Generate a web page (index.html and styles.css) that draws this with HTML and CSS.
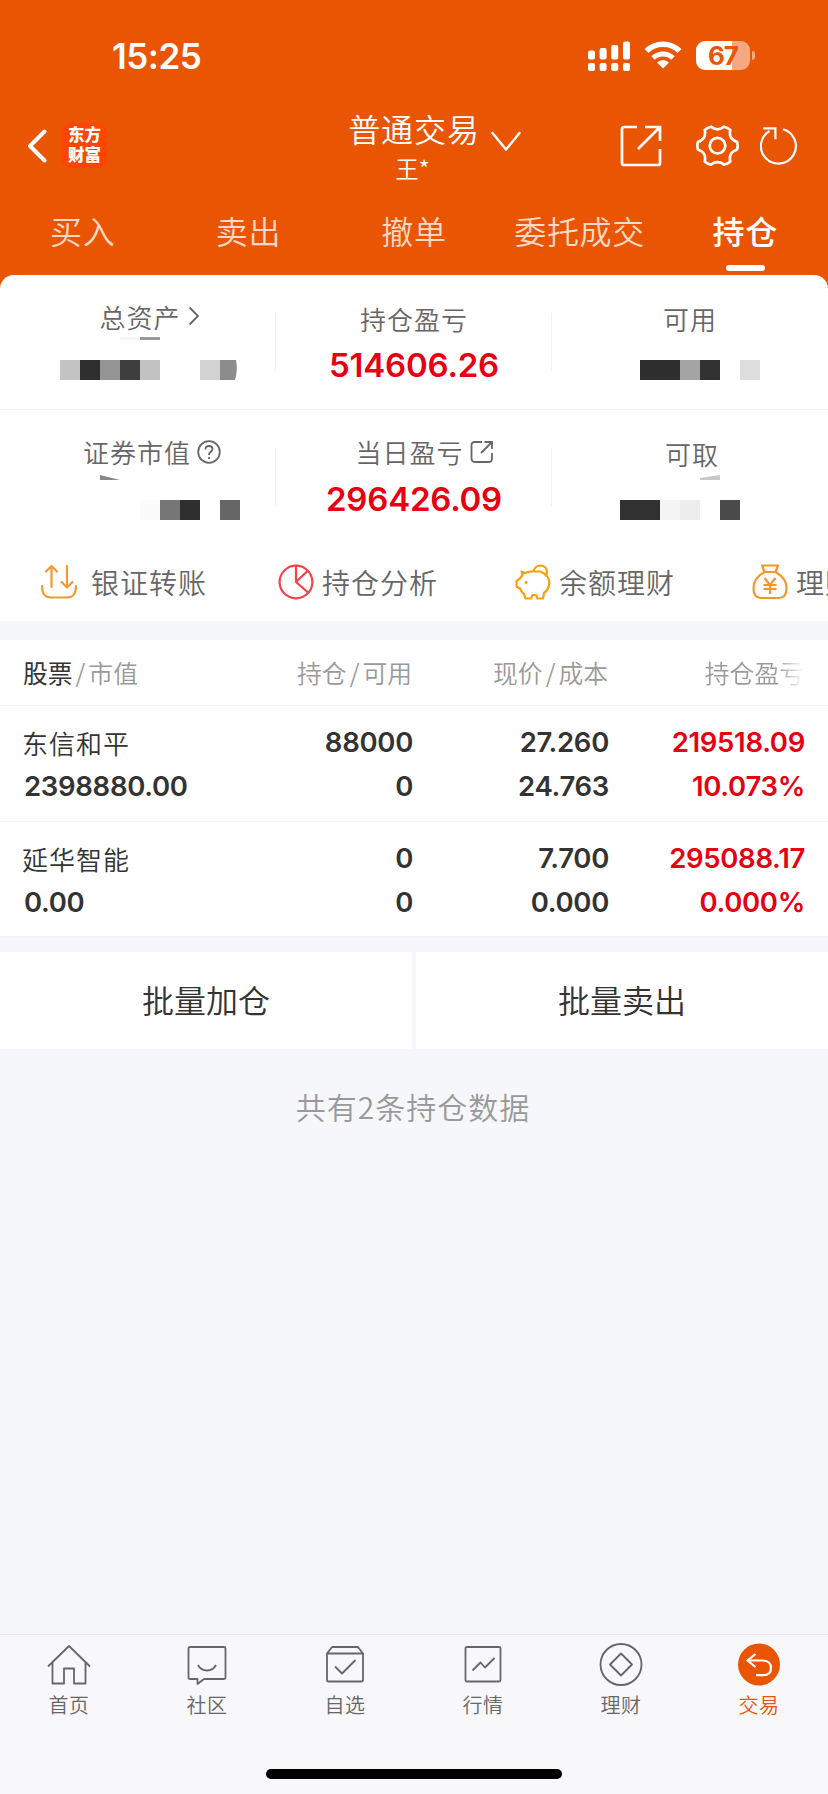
FILE: index.html
```html
<!DOCTYPE html>
<html lang="zh-CN">
<head>
  <meta charset="UTF-8">
  <meta name="viewport" content="width=device-width, initial-scale=1.0">
  <title>持仓</title>
  <link rel="stylesheet" href="styles.css">
</head>
<body>
  <div class="top">
    <div class="status-bar">
      <span class="time">15:25</span>
      <svg class="signal" width="42" height="30" viewBox="0 0 42 30" fill="#fff">
        <rect x="0" y="9.500" width="7" height="9" rx="2"/><rect x="11.600" y="7" width="7" height="11.500" rx="2"/><rect x="23.200" y="4" width="7" height="14.500" rx="2"/><rect x="35" y="0.500" width="7" height="18" rx="2"/>
        <rect x="0" y="22" width="7" height="8" rx="2"/><rect x="11.600" y="22" width="7" height="8" rx="2"/><rect x="23.200" y="22" width="7" height="8" rx="2"/><rect x="35" y="22" width="7" height="8" rx="2"/>
      </svg>
      <svg class="wifi" width="38" height="28" viewBox="0 0 38 28">
        <path d="M2.500 10 A23.500 23.500 0 0 1 35.500 10" fill="none" stroke="#fff" stroke-width="5.600"/>
        <path d="M9 17 A14.500 14.500 0 0 1 29 17" fill="none" stroke="#fff" stroke-width="5"/>
        <path d="M19 27.500 L13 21.500 Q19 16.500 25 21.500 Z" fill="#fff"/>
      </svg>
      <div class="battery"><span>67</span></div>
      <i class="battery-cap"></i>
    </div>

    <div class="nav">
      <svg class="back" width="20" height="34" viewBox="0 0 20 34" fill="none" stroke="#fff" stroke-width="4" stroke-linecap="round" stroke-linejoin="round"><path d="M17.500 2.500 L3 17 L17.500 31.500"/></svg>
      <div class="logo">东方<br>财富</div>
      <div class="title">
        <div class="title-main">普通交易</div>
        <div class="title-sub">王*</div>
      </div>
      <svg class="arrow-down" width="30" height="22" viewBox="0 0 30 22" fill="none" stroke="#fff" stroke-width="2.400" stroke-linecap="round" stroke-linejoin="round"><path d="M1.500 2 L15 18.500 L28.500 2"/></svg>
      <svg class="share" width="42" height="42" viewBox="0 0 42 42" fill="none" stroke="#fff" stroke-width="2.700">
        <path d="M17 2 H4 Q2 2 2 4 V38 Q2 40 4 40 H38 Q40 40 40 38 V24"/>
        <path d="M25 2 H40 V16 M40 2 L18 24"/>
      </svg>
      <svg class="gear" width="44" height="44" viewBox="0 0 44 44" fill="none" stroke="#fff" stroke-width="2.700" stroke-linejoin="round">
        <path d="M15.200 2.700 Q17.500 5.300 21.500 5.300 Q25.500 5.300 27.800 2.700 Q31.500 3.500 34.300 6 Q33.200 10.500 35 13.500 Q37 16.800 41 17.700 Q42.300 21.700 41 25.700 Q37 26.600 35 29.900 Q33.200 33 34.300 37.400 Q31.500 40 27.800 40.700 Q25.500 38.200 21.500 38.200 Q17.500 38.200 15.200 40.700 Q11.500 40 8.700 37.400 Q9.800 33 8 29.900 Q6 26.600 2 25.700 Q0.700 21.700 2 17.700 Q6 16.800 8 13.500 Q9.800 10.500 8.700 6 Q11.500 3.500 15.200 2.700 Z"/>
        <circle cx="21.500" cy="21.700" r="7.800"/>
      </svg>
      <svg class="refresh" width="40" height="40" viewBox="0 0 40 40" fill="none" stroke="#fff" stroke-width="2.200">
        <path d="M23 4.200 A17.500 17.500 0 1 1 9.500 6"/>
        <path d="M3.300 3.300 H15.400 V14.300"/>
      </svg>
    </div>

    <div class="tabs">
      <div class="tab">买入</div>
      <div class="tab">卖出</div>
      <div class="tab">撤单</div>
      <div class="tab">委托成交</div>
      <div class="tab active">持仓</div>
    </div>

    <div class="panel">
      <div class="stats">
        <div class="stat raised">
          <div class="label">总资产<svg class="more" width="12" height="20" viewBox="0 0 12 20" fill="none" stroke="#666" stroke-width="1.800"><path d="M1.500 1.500 L10 10 L1.500 18.500"/></svg></div>
          <svg class="mask" width="276" height="45" viewBox="0 0 276 45">
            <path fill="#f6f6f6" d="M120 2h20v3h-20z"/><path fill="#999" d="M140 2h20v3h-20z"/>
            <path fill="#c4c4c4" d="M60 25h20v20h-20z"/><path fill="#2f2f2f" d="M80 25h20v20h-20z"/><path fill="#949494" d="M100 25h20v20h-20z"/><path fill="#3e3e3e" d="M120 25h20v20h-20z"/><path fill="#c2c2c2" d="M140 25h20v20h-20z"/>
            <path fill="#d2d2d2" d="M200 25h20v20h-20z"/><path fill="#8c8c8c" d="M220 25h16q2 10 -1 20h-15z"/>
          </svg>
        </div>
        <div class="stat">
          <div class="label">持仓盈亏</div>
          <div class="value">514606.26</div>
        </div>
        <div class="stat">
          <div class="label">可用</div>
          <svg class="mask" width="276" height="45" viewBox="552 0 276 45">
            <path fill="#2e2e2e" d="M640 25h40v20h-40z"/><path fill="#a4a4a4" d="M680 25h20v20h-20z"/><path fill="#323232" d="M700 25h20v20h-20z"/><path fill="#ddd" d="M740 25h20v20h-20z"/>
          </svg>
        </div>
      </div>

      <div class="stats">
        <div class="stat">
          <div class="label with-icon">证券市值<svg class="help" width="24" height="24" viewBox="0 0 24 24" fill="none" stroke="#666" stroke-width="1.800"><circle cx="12" cy="12" r="10.800"/><path d="M8.500 9.500 Q8.500 6 12 6 Q15.500 6 15.500 9 Q15.500 10.500 13.500 12 Q12 13 12 15"/><path d="M12 17 v2"/></svg></div>
          <svg class="mask" width="276" height="50" viewBox="0 0 276 50">
            <path fill="#888" d="M100 5l20 5h-20z"/>
            <path fill="#fbfbfb" d="M140 30h20v20h-20z"/><path fill="#777" d="M160 30h20v20h-20z"/><path fill="#2f2f2f" d="M180 30h20v20h-20z"/><path fill="#666" d="M220 30h20v20h-20z"/>
          </svg>
        </div>
        <div class="stat">
          <div class="label with-icon">当日盈亏<svg class="link" width="24" height="24" viewBox="0 0 24 24" fill="none" stroke="#666" stroke-width="1.800"><path d="M12 2 H5 Q1.500 2 1.500 5 V18 Q1.500 22 5 22 H19 Q22 22 22 18 V13"/><path d="M14.500 2 H22 V9 M22 2 L11 13"/></svg></div>
          <div class="value">296426.09</div>
        </div>
        <div class="stat">
          <div class="label last-label">可取</div>
          <svg class="mask" width="276" height="50" viewBox="552 0 276 50">
            <path fill="#c8c8c8" d="M700 8l20 -3v5h-20z"/>
            <path fill="#313131" d="M620 30h40v20h-40z"/><path fill="#f4f4f4" d="M660 30h20v20h-20z"/><path fill="#ededed" d="M680 30h20v20h-20z"/><path fill="#4a4a4a" d="M720 30h20v20h-20z"/>
          </svg>
        </div>
      </div>

      <div class="actions">
        <div class="action transfer">
          <svg width="36" height="36" viewBox="0 0 36 36" fill="none" stroke="#f09a30" stroke-width="2.200" stroke-linecap="round" stroke-linejoin="round"><path d="M1.200 22 V25 Q2 33.500 10 33.500 H26 Q34 33.500 34.800 25 V22"/><path d="M10.500 23 V2.500 M5 7.500 L10.500 2 L16 7.500 M26 2 V22.500 M20.500 18 L26 23.500 L31.500 18"/></svg>
          <span>银证转账</span>
        </div>
        <div class="action">
          <svg width="36" height="36" viewBox="0 0 36 36" fill="none" stroke="#f84048" stroke-width="2.200" stroke-linejoin="round"><circle cx="18" cy="18" r="16.400"/><path d="M18 2 V18 L29.500 7 M18 18 L30 28.500"/></svg>
          <span>持仓分析</span>
        </div>
        <div class="action">
          <svg width="36" height="36" viewBox="0 0 36 36" fill="none" stroke="#f9a010" stroke-width="2.200" stroke-linejoin="round"><path d="M6.500 7.500 L10 9 Q15 7 19 7.500 H25 Q34 11 34.300 18 Q34.500 25 29 29 L28 34.500 H22.500 L21 31 H17.500 L16 34.500 H10.500 L9 30 Q6 28 5.500 25 L1.500 22.500 V17 L4.500 15 L7.500 11 Z"/><path d="M18.500 7.500 Q20 1.500 25.500 1.500 Q32 2 32 8 Q32 10.500 30 12"/><circle cx="11" cy="18.500" r="1.100" fill="#f9a010" stroke-width="1"/></svg>
          <span>余额理财</span>
        </div>
        <div class="action">
          <svg width="36" height="36" viewBox="0 0 36 36" fill="none" stroke="#f6952a" stroke-width="2.200" stroke-linejoin="round"><path d="M10 1.500 H26 L23.500 8 H12.500 Z"/><path d="M12.500 8 Q1.500 14 1.500 24 Q1.500 34 9 34 H27 Q34.500 34 34.500 24 Q34.500 14 23.500 8"/><path d="M12.500 14 L18 21 L23.500 14 M18 21 V30 M11.500 21 H24.500 M11.500 25 H24.500"/></svg>
          <span>理财</span>
        </div>
      </div>
    </div>
  </div>

  <div class="holdings">
    <div class="row head">
      <div><b>股票</b><i>/</i>市值</div>
      <div>持仓<i>/</i>可用</div>
      <div>现价<i>/</i>成本</div>
      <div class="fade">持仓盈亏</div>
    </div>
    <div class="row">
      <div><p class="name">东信和平</p><p>2398880.00</p></div>
      <div><p>88000</p><p>0</p></div>
      <div><p>27.260</p><p>24.763</p></div>
      <div class="red"><p>219518.09</p><p>10.073%</p></div>
    </div>
    <div class="row">
      <div><p class="name">延华智能</p><p>0.00</p></div>
      <div><p>0</p><p>0</p></div>
      <div><p>7.700</p><p>0.000</p></div>
      <div class="red"><p>295088.17</p><p>0.000%</p></div>
    </div>
  </div>

  <div class="batch">
    <div class="batch-btn">批量加仓</div>
    <div class="batch-btn">批量卖出</div>
  </div>
  <div class="summary">共有2条持仓数据</div>

  <div class="tabbar">
    <div class="tabbar-item">
      <svg width="44" height="44" viewBox="0 0 44 44" fill="none" stroke="#666" stroke-width="1.800" stroke-linejoin="round"><path d="M1 23.500 L22 3 L43 23.500 M5.500 19.500 V40.500 H17 V25.500 H27 V40.500 H38.500 V19.500"/></svg>
      <span>首页</span>
    </div>
    <div class="tabbar-item">
      <svg width="44" height="44" viewBox="0 0 44 44" fill="none" stroke="#666" stroke-width="1.800" stroke-linejoin="round"><path d="M5 4 H39 Q40.500 4 40.500 5.500 V34.500 Q40.500 36 39 36 H19 L12.500 41 V36 H5 Q3.500 36 3.500 34.500 V5.500 Q3.500 4 5 4 Z"/><path d="M13 22 Q16 27.500 22 27.500 Q28 27.500 31 22"/></svg>
      <span>社区</span>
    </div>
    <div class="tabbar-item">
      <svg width="44" height="44" viewBox="0 0 44 44" fill="none" stroke="#666" stroke-width="1.800" stroke-linejoin="round"><path d="M4 10.500 L9 4 H35 L40 10.500 M4 10.500 H40 V37 Q40 38.500 38.500 38.500 H5.500 Q4 38.500 4 37 Z"/><path d="M12 23.500 L19 30.500 L32.500 17"/></svg>
      <span>自选</span>
    </div>
    <div class="tabbar-item">
      <svg width="44" height="44" viewBox="0 0 44 44" fill="none" stroke="#666" stroke-width="1.800" stroke-linejoin="round"><rect x="4.500" y="4" width="35" height="34.500" rx="1.500"/><path d="M11.500 27.500 L19.500 19.500 L24 24.500 L33.500 15"/></svg>
      <span>行情</span>
    </div>
    <div class="tabbar-item">
      <svg width="44" height="44" viewBox="0 0 44 44" fill="none" stroke="#666" stroke-width="1.800" stroke-linejoin="round"><circle cx="22" cy="21.500" r="20.500"/><path d="M22 10.500 L33 21.500 L22 32.500 L11 21.500 Z"/></svg>
      <span>理财</span>
    </div>
    <div class="tabbar-item active">
      <svg width="44" height="44" viewBox="0 0 44 44" fill="none" stroke="#fff" stroke-width="2.200"><circle cx="22" cy="21.500" r="21" fill="#ea5504" stroke="none"/><path d="M18.500 11 L10.500 17.500 L18.500 24 M11 17.500 H26 Q34 18 34 25 Q34 32 26 32.200 H19"/></svg>
      <span>交易</span>
    </div>
  </div>
  <div class="home-indicator"></div>
</body>
</html>
```

FILE: styles.css
```css
* {
  box-sizing: border-box;
}
body {
  margin: 0;
  width: 828px;
  height: 1794px;
  overflow: hidden;
  display: flex;
  flex-direction: column;
  font-family: "Noto Sans CJK SC", sans-serif;
  font-weight: 350;
  background: linear-gradient(#f6f7fa 1650px, #f8f8fa 1650px);
  color: #333;
}
svg {
  display: block;
  flex: none;
}
i {
  font-style: normal;
}
.top {
  background: #ea5504;
  color: #fff;
}

/* status bar */
.status-bar {
  display: flex;
  height: 100px;
  padding-top: 41px;
}
.time {
  width: 476px;
  margin-left: 112px;
  font: 600 35px/31px Inter, sans-serif;
  letter-spacing: -0.5px;
}
.wifi {
  margin-left: 14px;
}
.battery {
  width: 54px;
  height: 29px;
  margin-left: 14px;
  border-radius: 9px;
  background: linear-gradient(to right, #fff 36px, #f6a981 36px);
  color: #ea5504;
  font: 700 26px/30px Inter, sans-serif;
  letter-spacing: -1px;
  text-align: center;
}
.battery-cap {
  width: 3px;
  height: 9px;
  margin: 10px 0 0 2px;
  border-radius: 0 4px 4px 0;
  background: #f6a981;
}

/* navigation */
.nav {
  display: flex;
  align-items: flex-start;
  height: 98px;
  padding-left: 27px;
}
.back {
  margin-top: 29px;
}
.logo {
  width: 45px;
  height: 45px;
  margin: 23px 0 0 15px;
  padding-top: 2px;
  border-radius: 9px;
  background: #ff4500;
  font-size: 16.5px;
  font-weight: 900;
  line-height: 19.5px;
  text-align: center;
}
.title {
  width: 132px;
  margin: 8px 0 0 241px;
  text-align: center;
  white-space: nowrap;
}
.title-main {
  font-size: 32px;
  line-height: 40px;
  letter-spacing: 0.9px;
}
.title-sub {
  padding-right: 3px;
  font-size: 23.5px;
  line-height: 41px;
}
.arrow-down {
  margin: 31px 0 0 11px;
}
.share {
  margin: 25px 0 0 99px;
}
.gear {
  margin: 24px 0 0 34px;
}
.refresh {
  margin: 25px 0 0 20px;
}

/* trade tabs */
.tabs {
  display: grid;
  grid-template-columns: repeat(5, 1fr);
  height: 77px;
}
.tab {
  font-size: 32px;
  line-height: 64px;
  letter-spacing: 0.7px;
  text-align: center;
  color: #fbd9c5;
}
.tab.active {
  color: #fff;
  font-weight: 500;
}
.tab.active::after {
  content: "";
  display: block;
  width: 39px;
  height: 6px;
  margin: 3px auto 0;
  border-radius: 3px;
  background: #fff;
}

/* account figures */
.panel {
  height: 346px;
  border-radius: 14px 14px 0 0;
  background: #fff;
  color: #666;
}
.stats {
  display: grid;
  grid-template-columns: repeat(3, 276px);
  height: 134px;
}
.stats + .stats {
  border-top: 1px solid #f2f2f2;
}
.stat {
  padding-top: 25px;
  background: linear-gradient(#f2f2f2, #f2f2f2) right 38px / 1px 58px no-repeat;
}
.stat:last-child {
  background: none;
}
.label {
  display: flex;
  align-items: center;
  justify-content: center;
  height: 36px;
  font-size: 26px;
  letter-spacing: 1px;
}
.mask {
  margin-top: -1px;
}
.raised .label {
  margin-top: -2px;
  padding-left: 23px;
}
.raised .mask {
  margin-top: 1px;
}
.with-icon {
  height: 36px;
  margin-top: -2px;
  margin-bottom: 2px;
  padding-left: 28px;
}
.with-icon + .value {
  margin-top: 10px;
}
.last-label {
  padding-left: 4px;
}
.more {
  margin-left: 7px;
}
.help {
  margin: 2px 0 0 6px;
}
.link {
  margin: 2px 7px 0 6px;
}
.value {
  font: 600 33px/40px Inter, sans-serif;
  margin-top: 9px;
  color: #e60012;
  text-align: center;
  letter-spacing: -0.2px;
}

/* quick entries */
.actions {
  display: flex;
  height: 78px;
  padding-left: 41px;
  overflow: hidden;
}
.action {
  flex: none;
  display: flex;
  align-items: center;
  gap: 8px;
  width: 237px;
  font-size: 28px;
  letter-spacing: 1px;
  white-space: nowrap;
}
.transfer {
  gap: 14px;
}

/* holdings table */
.holdings {
  margin-top: 19px;
  background: #fff;
  border-bottom: 2px solid #f2f2f3;
}
.row {
  display: grid;
  grid-template-columns: 189px 200px 196px 196px;
  height: 115px;
  padding: 15px 0 0 24px;
  font: 560 27.5px/43.5px Inter, sans-serif;
  letter-spacing: -0.3px;
  text-align: right;
}
.row + .row {
  border-top: 1px solid #f4f4f4;
  height: 116px;
}
.row + .row + .row {
  height: 115px;
}
.row div {
  white-space: nowrap;
}
.row div:first-child {
  text-align: left;
}
.row p {
  margin: 0;
}
.row .name {
  margin-left: -2px;
  font: 350 26px/44px "Noto Sans CJK SC", sans-serif;
  letter-spacing: 1px;
}
.row.head {
  height: 65px;
  padding: 0 0 0 23px;
  font: 350 24.8px/65px "Noto Sans CJK SC", sans-serif;
  letter-spacing: 0;
  color: #999;
}
.head b {
  font-weight: 400;
  color: #333;
}
.head i {
  margin: 0 3px;
}
.fade {
  background: linear-gradient(to right, #999 86%, #fff);
  background-clip: text;
  color: transparent;
}
.red {
  color: #e60012;
}

.batch {
  display: flex;
  gap: 4px;
  margin-top: 14px;
}
.batch-btn {
  flex: 1;
  height: 97px;
  background: #fff;
  font-size: 32px;
  line-height: 95px;
  text-align: center;
}
.summary {
  margin-top: 35px;
  padding-right: 2px;
  font-size: 30px;
  line-height: 44px;
  letter-spacing: 1px;
  text-align: center;
  color: #999;
}

/* bottom bar */
.tabbar {
  display: grid;
  grid-template-columns: repeat(6, 1fr);
  height: 135px;
  margin-top: auto;
  padding-top: 8px;
  border-top: 1px solid #e4e5e8;
  background: #f8f8fa;
}
.tabbar-item {
  display: flex;
  flex-direction: column;
  align-items: center;
  font-size: 20px;
  line-height: 35px;
  letter-spacing: 0.6px;
  color: #666;
}
.tabbar-item.active {
  color: #ea5504;
}
.home-indicator {
  flex: none;
  width: 296px;
  height: 10px;
  margin: 0 auto 15px;
  border-radius: 5px;
  background: #000;
}
```
